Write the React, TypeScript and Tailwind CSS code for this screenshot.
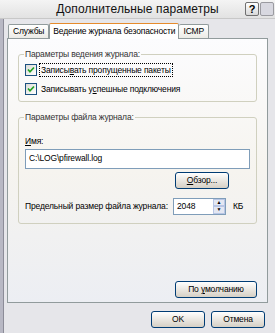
import React from "react";

const font = { fontFamily: "'Liberation Sans', Arial, sans-serif", letterSpacing: "-0.15px" };

function Check({ label, focused }: { label: React.ReactNode; focused?: boolean }) {
  return (
    <div className="flex items-center gap-[3px] h-[13px] whitespace-nowrap">
      <div className="w-[12px] h-[12px] border border-[#1c5180] bg-gradient-to-br from-[#dcdcd7] to-white flex items-center justify-center shrink-0">
        <svg width="8" height="8" viewBox="0 0 8 8">
          <path d="M1 3.5 L3 5.8 L7 1.5" stroke="#21a121" strokeWidth="1.7" fill="none" />
        </svg>
      </div>
      <span className={focused ? "outline outline-1 outline-dotted outline-black px-[1px] leading-[12px]" : "px-[1px] leading-[12px]"}>{label}</span>
    </div>
  );
}

function Btn({ children, w }: { children: React.ReactNode; w: string }) {
  return (
    <div className={`${w} h-[17px] rounded-[3px] border border-[#003c74] bg-gradient-to-b from-white to-[#d6d0c5] flex items-center justify-center text-[8.5px] text-black whitespace-nowrap`}>
      {children}
    </div>
  );
}

export default function App() {
  return (
    <div className="w-[275px] h-[333px] bg-[#d5d5dc] flex flex-col text-[8.5px] text-black overflow-hidden" style={font}>
      {/* title bar */}
      <div className="h-[19px] flex items-center bg-gradient-to-b from-[#f4f4f4] to-[#e2e2e2] border-b border-[#c8c8c8] relative">
        <div className="flex-1 text-center text-[12px] pl-[30px] text-[#111] whitespace-nowrap tracking-[0.1px]">Дополнительные параметры</div>
        <div className="flex gap-[1px] mr-[1px]">
          <div className="w-[14px] h-[14px] border border-[#707070] rounded-[2px] bg-gradient-to-b from-white to-[#d8d8d8] flex items-center justify-center text-[11px] font-bold leading-none">?</div>
          <div className="w-[14px] h-[14px] border border-[#9a9aa0] rounded-[2px] bg-[#d8d8e0]" />
        </div>
      </div>
      {/* body */}
      <div className="flex-1 flex border-l-[3px] border-[#b8b8c4] bg-[#e6e6ea]">
        <div className="w-[1px] bg-[#8c8c98]" />
        <div className="flex-1 flex flex-col pl-[3px] pr-[7px] pt-[4px] pb-[3px]">
          {/* tabs */}
          <div className="flex items-end h-[15px] pl-[1px] whitespace-nowrap">
            <div className="h-[14px] px-[4px] border border-b-0 border-[#919b9c] rounded-t-[2px] bg-gradient-to-b from-white to-[#ecebe6] flex items-center">Службы</div>
            <div className="h-[16px] px-[3px] border border-b-0 border-[#919b9c] border-t-[#e68b2c] rounded-t-[2px] bg-white flex items-center -mb-[1px] z-10">Ведение журнала безопасности</div>
            <div className="h-[14px] px-[4px] border border-b-0 border-l-0 border-[#919b9c] rounded-t-[2px] bg-gradient-to-b from-white to-[#ecebe6] flex items-center">ICMP</div>
          </div>
          {/* panel */}
          <div className="h-[265px] border border-[#919b9c] bg-gradient-to-b from-[#fcfcfe] via-[#f6f4ef] to-[#eceef3] flex flex-col px-[10px] pt-[9px]">
            <fieldset className="border border-[#d0d0bf] rounded-[3px] px-[6px] pb-[5px] h-[54px]">
              <legend className="px-[1px] -ml-[1px] text-[#333] whitespace-nowrap">Параметры ведения журнала:</legend>
              <div className="flex flex-col gap-[6px] pt-[3px]">
                <Check focused label={<>Записы<u>в</u>ать пропущенные пакеты</>} />
                <Check label={<>Записывать у<u>с</u>пешные подключения</>} />
              </div>
            </fieldset>
            <fieldset className="mt-[9px] border border-[#d0d0bf] rounded-[3px] px-[6px] pb-[5px] h-[113px]">
              <legend className="px-[1px] -ml-[1px] text-[#333] whitespace-nowrap">Параметры файла журнала:</legend>
              <div className="pt-[11px]"><u>И</u>мя:</div>
              <div className="mt-[1px] h-[20px] border border-[#7f9db9] bg-white flex items-center px-[3px] whitespace-nowrap">C:\LOG\pfirewall.log</div>
              <div className="flex justify-end pr-[21px] mt-[3px]">
                <Btn w="w-[54px]"><span><u>О</u>бзор...</span></Btn>
              </div>
              <div className="flex items-center mt-[9px] whitespace-nowrap">
                <span className="w-[148px]">Предельный размер файла журнала:</span>
                <div className="w-[53px] h-[17px] border border-[#7f9db9] bg-white flex items-center justify-between pl-[3px]">
                  <span>2048</span>
                  <div className="flex flex-col w-[12px] h-[15px] gap-0">
                    <div className="h-[7.5px] bg-[#e3e7f2] border border-[#b8c6e5] flex items-center justify-center text-[5px] leading-none">▲</div>
                    <div className="h-[7.5px] bg-[#e3e7f2] border border-[#b8c6e5] flex items-center justify-center text-[5px] leading-none">▼</div>
                  </div>
                </div>
                <span className="ml-[7px]">КБ</span>
              </div>
            </fieldset>
            <div className="flex-1" />
            <div className="flex justify-end mb-[4px]">
              <Btn w="w-[82px]"><span>По <u>у</u>молчанию</span></Btn>
            </div>
          </div>
          {/* footer */}
          <div className="flex justify-end gap-[6px] mt-[8px] pr-[3px]">
            <Btn w="w-[54px]">OK</Btn>
            <Btn w="w-[54px]">Отмена</Btn>
          </div>
        </div>
      </div>
    </div>
  );
}
